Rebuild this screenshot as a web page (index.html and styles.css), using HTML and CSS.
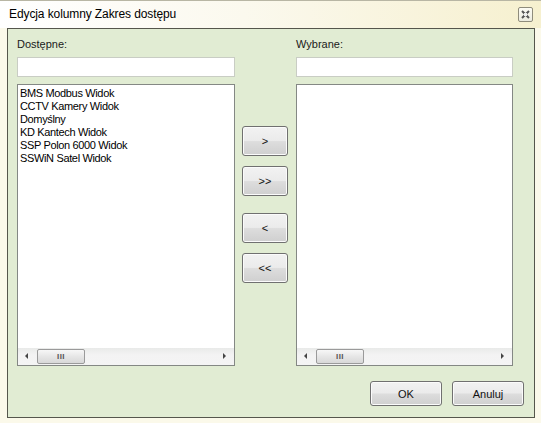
FILE: index.html
```html
<!DOCTYPE html>
<html lang="pl">
<head>
<meta charset="utf-8">
<title>Edycja kolumny Zakres dostępu</title>
<link rel="stylesheet" href="styles.css">
</head>
<body>
<div class="window">
  <div class="titlebar">
    <span class="title">Edycja kolumny Zakres dostępu</span>
    <span class="close">
      <svg width="9" height="9" viewBox="0 0 9 9"><path d="M1 1L8 8M8 1L1 8" stroke="#555" stroke-width="2"/><rect x="3" y="3" width="3" height="3" fill="#eee"/></svg>
    </span>
  </div>
  <div class="client">
    <div class="panes">
      <div class="col col-left">
        <div class="label">Dostępne:</div>
        <div class="input"></div>
        <div class="list">
          <div class="items">
            <div class="item">BMS Modbus Widok</div>
            <div class="item">CCTV Kamery Widok</div>
            <div class="item">Domyślny</div>
            <div class="item">KD Kantech Widok</div>
            <div class="item">SSP Polon 6000 Widok</div>
            <div class="item">SSWiN Satel Widok</div>
          </div>
          <div class="hscroll">
            <span class="arrow arrow-left"></span>
            <span class="thumb"><span class="grip">III</span></span>
            <span class="track"></span>
            <span class="arrow arrow-right"></span>
          </div>
        </div>
      </div>
      <div class="mid">
        <button class="btn mv">&gt;</button>
        <button class="btn mv">&gt;&gt;</button>
        <button class="btn mv sep">&lt;</button>
        <button class="btn mv">&lt;&lt;</button>
      </div>
      <div class="col col-right">
        <div class="label">Wybrane:</div>
        <div class="input"></div>
        <div class="list">
          <div class="items"></div>
          <div class="hscroll">
            <span class="arrow arrow-left"></span>
            <span class="thumb"><span class="grip">III</span></span>
            <span class="track"></span>
            <span class="arrow arrow-right"></span>
          </div>
        </div>
      </div>
    </div>
    <div class="footer">
      <button class="btn dlg">OK</button>
      <button class="btn dlg">Anuluj</button>
    </div>
  </div>
</div>
</body>
</html>
```

FILE: styles.css
```css
html, body {
  margin: 0;
  padding: 0;
}
body {
  width: 541px;
  height: 423px;
  overflow: hidden;
  font-family: "Liberation Sans", Arial, sans-serif;
  font-size: 11px;
  color: #111;
}
.window {
  width: 541px;
  height: 423px;
  box-sizing: border-box;
  border-top: 1px solid #b8b6a4;
  background: #fbf9ea;
  display: flex;
  flex-direction: column;
}
.titlebar {
  height: 27px;
  display: flex;
  align-items: center;
  justify-content: space-between;
  padding: 0 8px 0 9px;
  background: linear-gradient(to right, #ffffff 0%, #fbf9ee 45%, #f6f0cf 100%);
}
.title {
  font-size: 12px;
  color: #000;
  margin-top: -1px;
  letter-spacing: -0.1px;
}
.close {
  width: 13px;
  height: 13px;
  border: 1px solid #8f8c7c;
  border-radius: 2px;
  background: linear-gradient(#fdfcf4, #ecebdf);
  display: flex;
  align-items: center;
  justify-content: center;
}
.client {
  margin: 0 6px 5px 7px;
  flex: 1;
  border: 1px solid #55564c;
  background: #e1ecd3;
  display: flex;
  flex-direction: column;
  padding: 0 0 0 9px;
}
.panes {
  display: flex;
}
.col {
  display: flex;
  flex-direction: column;
}
.col-left {
  width: 218px;
}
.col-right {
  width: 217px;
}
.label {
  height: 14px;
  line-height: 14px;
  margin-top: 8px;
  color: #1a1a1a;
}
.input {
  margin-top: 6px;
  height: 18px;
  background: #fff;
  border: 1px solid #c9cdc4;
}
.list {
  margin-top: 7px;
  height: 280px;
  border: 1px solid #848884;
  background: #fff;
  display: flex;
  flex-direction: column;
}
.items {
  flex: 1;
  padding: 2px 0 0 2px;
}
.item {
  height: 13px;
  line-height: 13px;
  letter-spacing: -0.35px;
  color: #000;
}
.hscroll {
  height: 17px;
  background: linear-gradient(#e9eae9, #f3f3f3 40%, #f4f4f4);
  display: flex;
  align-items: center;
}
.arrow {
  width: 19px;
  height: 17px;
  position: relative;
}
.arrow-left::after, .arrow-right::after {
  content: "";
  position: absolute;
  top: 5px;
  border-top: 3px solid transparent;
  border-bottom: 3px solid transparent;
}
.arrow-left::after {
  left: 7px;
  border-right: 3px solid #444;
}
.arrow-right::after {
  left: 8px;
  border-left: 3px solid #444;
}
.thumb {
  width: 48px;
  height: 15px;
  box-sizing: border-box;
  border: 1px solid #9a9a9a;
  border-radius: 2px;
  background: linear-gradient(#f7f7f7, #e6e6e6 50%, #d8d8d8);
  display: flex;
  align-items: center;
  justify-content: center;
}
.grip {
  font-size: 8px;
  color: #555;
  letter-spacing: 0.5px;
  font-weight: bold;
}
.track {
  flex: 1;
}
.mid {
  width: 46px;
  margin: 0 8px 0 7px;
  padding-top: 97px;
  display: flex;
  flex-direction: column;
  gap: 10px;
}
.btn {
  font-family: "Liberation Sans", Arial, sans-serif;
  font-size: 11px;
  color: #111;
  border: 1px solid #707070;
  border-radius: 3px;
  background: linear-gradient(#f2f2f2 0%, #ebebeb 48%, #dddddd 52%, #cfcfcf 100%);
  box-shadow: inset 0 0 0 1px #fbfbfb;
  padding: 0;
  margin: 0;
}
.mv {
  height: 30px;
  width: 46px;
}
.mv.sep {
  margin-top: 7px;
}
.footer {
  display: flex;
  justify-content: flex-end;
  gap: 10px;
  padding: 15px 10px 0 0;
}
.dlg {
  width: 72px;
  height: 25px;
}
```
